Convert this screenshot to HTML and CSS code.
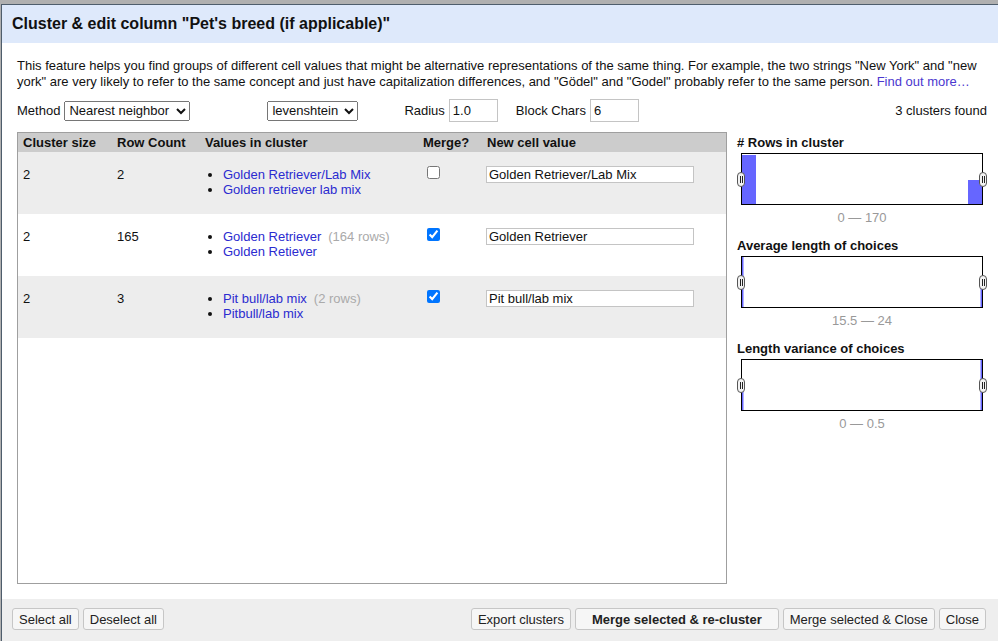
FILE: index.html
```html
<!DOCTYPE html>
<html>
<head>
<meta charset="utf-8">
<title>Cluster &amp; edit column</title>
<link rel="stylesheet" href="styles.css">
</head>
<body>
<div class="dialog">
  <div class="dlg-header">Cluster &amp; edit column "Pet's breed (if applicable)"</div>
  <div class="dlg-body">
    <p class="desc">This feature helps you find groups of different cell values that might be alternative representations of the same thing. For example, the two strings "New York" and "new york" are very likely to refer to the same concept and just have capitalization differences, and "Gödel" and "Godel" probably refer to the same person. <a href="#" class="more">Find out more…</a></p>
    <div class="controls">
      <span class="lbl">Method</span>
      <select class="sel sel-method"><option>Nearest neighbor</option></select>
      <select class="sel sel-func"><option>levenshtein</option></select>
      <span class="lbl lbl-radius">Radius</span>
      <input class="num" type="text" value="1.0">
      <span class="lbl lbl-block">Block Chars</span>
      <input class="num" type="text" value="6">
      <span class="found">3 clusters found</span>
    </div>
    <div class="main">
      <div class="table-box">
        <div class="row head">
          <div class="cell">Cluster size</div>
          <div class="cell">Row Count</div>
          <div class="cell">Values in cluster</div>
          <div class="cell">Merge?</div>
          <div class="cell">New cell value</div>
        </div>
        <div class="row odd">
          <div class="cell">2</div>
          <div class="cell">2</div>
          <div class="cell">
            <ul class="vals">
              <li><a href="#">Golden Retriever/Lab Mix</a></li>
              <li><a href="#">Golden retriever lab mix</a></li>
            </ul>
          </div>
          <div class="cell"><input class="chk" type="checkbox"></div>
          <div class="cell"><input class="newval" type="text" value="Golden Retriever/Lab Mix"></div>
        </div>
        <div class="row">
          <div class="cell">2</div>
          <div class="cell">165</div>
          <div class="cell">
            <ul class="vals">
              <li><a href="#">Golden Retriever</a><span class="cnt">(164 rows)</span></li>
              <li><a href="#">Golden Retiever</a></li>
            </ul>
          </div>
          <div class="cell"><input class="chk" type="checkbox" checked></div>
          <div class="cell"><input class="newval" type="text" value="Golden Retriever"></div>
        </div>
        <div class="row odd">
          <div class="cell">2</div>
          <div class="cell">3</div>
          <div class="cell">
            <ul class="vals">
              <li><a href="#">Pit bull/lab mix</a><span class="cnt">(2 rows)</span></li>
              <li><a href="#">Pitbull/lab mix</a></li>
            </ul>
          </div>
          <div class="cell"><input class="chk" type="checkbox" checked></div>
          <div class="cell"><input class="newval" type="text" value="Pit bull/lab mix"></div>
        </div>
      </div>
      <div class="facets">
        <div class="facet">
          <div class="facet-title"># Rows in cluster</div>
          <div class="hist">
            <svg class="hist-svg" width="240" height="50" viewBox="0 0 240 50">
              <rect x="0" y="1" width="14" height="49" fill="#6666ff"/>
              <rect x="226" y="26" width="14" height="24" fill="#6666ff"/>
            </svg>
            <span class="handle handle-l"></span>
            <span class="handle handle-r"></span>
          </div>
          <div class="range">0 — 170</div>
        </div>
        <div class="facet">
          <div class="facet-title">Average length of choices</div>
          <div class="hist">
            <svg class="hist-svg" width="240" height="50" viewBox="0 0 240 50">
              <rect x="0" y="0" width="1.5" height="50" fill="#6666ff"/>
              <rect x="238.5" y="25" width="1.5" height="25" fill="#6666ff"/>
            </svg>
            <span class="handle handle-l"></span>
            <span class="handle handle-r"></span>
          </div>
          <div class="range">15.5 — 24</div>
        </div>
        <div class="facet">
          <div class="facet-title">Length variance of choices</div>
          <div class="hist">
            <svg class="hist-svg" width="240" height="50" viewBox="0 0 240 50">
              <rect x="0" y="20" width="1.5" height="30" fill="#6666ff"/>
              <rect x="238.5" y="0" width="1.5" height="50" fill="#6666ff"/>
            </svg>
            <span class="handle handle-l"></span>
            <span class="handle handle-r"></span>
          </div>
          <div class="range">0 — 0.5</div>
        </div>
      </div>
    </div>
  </div>
  <div class="dlg-footer">
    <div class="btns">
      <button class="btn">Select all</button>
      <button class="btn">Deselect all</button>
    </div>
    <div class="btns">
      <button class="btn">Export clusters</button>
      <button class="btn primary">Merge selected &amp; re-cluster</button>
      <button class="btn">Merge selected &amp; Close</button>
      <button class="btn">Close</button>
    </div>
  </div>
</div>
</body>
</html>
```
FILE: styles.css
```css
* { box-sizing: border-box; }
html, body { margin: 0; padding: 0; }
body {
  background: #b0b0b0;
  font-family: "Liberation Sans", Arial, sans-serif;
  font-size: 13px;
  color: #111;
  overflow: hidden;
}
.dialog {
  margin: 4px 0 0 1px;
  width: 997px;
  background: #fff;
  border-top: 1px solid #4e5d6c;
  border-left: 1px solid #4e5d6c;
}
.dlg-header {
  height: 38px;
  background: #dee9fb;
  padding: 0 10px;
  font-weight: bold;
  font-size: 16px;
  line-height: 38px;
  color: #111;
}
.dlg-body {
  padding: 15px 11px 15px 15px;
}
.desc {
  margin: 0;
  line-height: 16px;
  height: 32px;
  color: #111;
}
.more { color: #4b38cf; text-decoration: none; }
.controls {
  margin-top: 9px;
  height: 23px;
  display: flex;
  align-items: center;
}
.lbl { white-space: nowrap; }
.sel {
  font-family: "Liberation Sans", Arial, sans-serif;
  font-size: 13px;
  height: 20px;
  margin-left: 4px;
  color: #111;
}
.sel-method { width: 126px; }
.sel-func { width: 91px; margin-left: 77px; }
.lbl-radius { margin-left: 46px; }
.lbl-block { margin-left: 18px; }
.num {
  font-family: "Liberation Sans", Arial, sans-serif;
  font-size: 13px;
  width: 49px;
  height: 23px;
  margin-left: 4px;
  border: 1px solid #c4c4c4;
  padding: 0 3px;
  color: #111;
}
.found { margin-left: auto; }
.main {
  margin-top: 10px;
  height: 452px;
  display: flex;
  gap: 10px;
}
.table-box {
  width: 710px;
  border: 1px solid #9f9f9f;
  overflow: hidden;
}
.row {
  display: grid;
  grid-template-columns: 94px 88px 218px 64px 1fr;
  height: 62px;
}
.row.head {
  height: 19px;
  background: #cccccc;
  font-weight: bold;
}
.row.head .cell { padding-top: 0; line-height: 19px; }
.row.odd { background: #ededed; }
.cell {
  padding: 15px 5px 0 5px;
  line-height: 15px;
}
.vals {
  margin: 0;
  padding-left: 18px;
  list-style: disc;
}
.vals a { color: #2b2bd0; text-decoration: none; }
.cnt { color: #aaaaaa; margin-left: 7px; }
.chk {
  display: block;
  margin: -1px 0 0 4px;
  width: 13px;
  height: 13px;
}
.newval {
  display: block;
  width: 208px;
  height: 17px;
  margin: -1px 0 0 -1px;
  border: 1px solid #c4c4c4;
  padding: 0 2px;
  font-family: "Liberation Sans", Arial, sans-serif;
  font-size: 13px;
  color: #111;
}
.facets {
  width: 250px;
  padding-top: 3px;
}
.facet + .facet { margin-top: 13px; }
.facet-title {
  font-weight: bold;
  line-height: 15px;
}
.hist {
  position: relative;
  margin: 3px 0 0 4px;
  width: 242px;
  height: 52px;
  border: 1px solid #000;
}
.hist-svg { display: block; }
.handle {
  position: absolute;
  top: 18px;
  width: 8px;
  height: 15px;
  border: 1px solid #555;
  border-radius: 4px;
  background: #f3f3f3;
}
.handle::after {
  content: "";
  position: absolute;
  left: 2px;
  top: 3px;
  width: 0;
  height: 7px;
  border-left: 1px solid #222;
  border-right: 1px solid #222;
  box-sizing: content-box;
  padding-right: 1px;
}
.handle-l { left: -5px; }
.handle-r { right: -5px; }
.range {
  margin: 5px 0 0 4px;
  width: 242px;
  text-align: center;
  line-height: 15px;
  color: #999;
}
.dlg-footer {
  height: 42px;
  background: #eeeeee;
  padding: 9px 12px 0 10px;
  display: flex;
  justify-content: space-between;
  align-items: flex-start;
}
.btns { display: flex; gap: 4px; }
.btn {
  font-family: "Liberation Sans", Arial, sans-serif;
  font-size: 13px;
  height: 22px;
  padding: 0 6px;
  border: 1px solid #c6c6c6;
  border-radius: 3px;
  background: #f6f6f6;
  color: #222;
}
.btn.primary { font-weight: bold; padding: 0 16px; }
```
